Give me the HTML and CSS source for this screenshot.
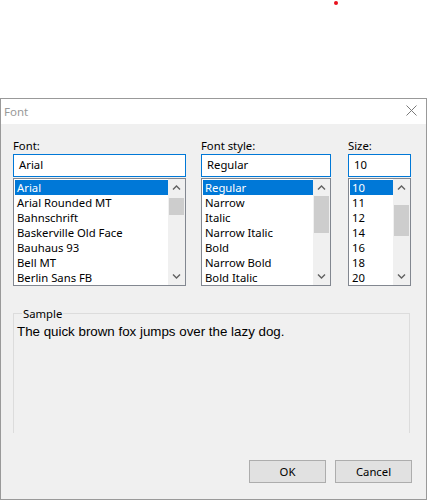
FILE: index.html
```html
<!DOCTYPE html>
<html>
<head>
<meta charset="utf-8">
<link rel="stylesheet" href="styles.css">
</head>
<body>
<div class="backdrop"><span class="dot"></span></div>
<div class="dialog">
  <div class="titlebar">
    <span class="title">Font</span>
    <svg class="close" width="11" height="11" viewBox="0 0 11 11"><path d="M0.5 0.5 L10.5 10.5 M10.5 0.5 L0.5 10.5" stroke="#7a7a7a" stroke-width="1" fill="none"/></svg>
  </div>
  <div class="content">
    <div class="pickers">
      <div class="col col-font">
        <div class="label">Font:</div>
        <div class="input">Arial</div>
        <div class="list">
          <div class="items">
            <div class="item sel">Arial</div>
            <div class="item">Arial Rounded MT</div>
            <div class="item">Bahnschrift</div>
            <div class="item">Baskerville Old Face</div>
            <div class="item">Bauhaus 93</div>
            <div class="item">Bell MT</div>
            <div class="item">Berlin Sans FB</div>
          </div>
          <div class="scrollbar">
            <svg class="arrow" width="17" height="17" viewBox="0 0 17 17"><polyline points="5,10.5 8.5,7 12,10.5" fill="none" stroke="#606060" stroke-width="1.4"/></svg>
            <div class="track"><div class="thumb" style="margin-top:2px;height:17px"></div></div>
            <svg class="arrow" width="17" height="17" viewBox="0 0 17 17"><polyline points="5,6.5 8.5,10 12,6.5" fill="none" stroke="#606060" stroke-width="1.4"/></svg>
          </div>
        </div>
      </div>
      <div class="col col-style">
        <div class="label">Font style:</div>
        <div class="input">Regular</div>
        <div class="list">
          <div class="items">
            <div class="item sel">Regular</div>
            <div class="item">Narrow</div>
            <div class="item">Italic</div>
            <div class="item">Narrow Italic</div>
            <div class="item">Bold</div>
            <div class="item">Narrow Bold</div>
            <div class="item">Bold Italic</div>
          </div>
          <div class="scrollbar">
            <svg class="arrow" width="17" height="17" viewBox="0 0 17 17"><polyline points="5,10.5 8.5,7 12,10.5" fill="none" stroke="#606060" stroke-width="1.4"/></svg>
            <div class="track"><div class="thumb" style="margin-top:0px;height:37px"></div></div>
            <svg class="arrow" width="17" height="17" viewBox="0 0 17 17"><polyline points="5,6.5 8.5,10 12,6.5" fill="none" stroke="#606060" stroke-width="1.4"/></svg>
          </div>
        </div>
      </div>
      <div class="col col-size">
        <div class="label">Size:</div>
        <div class="input">10</div>
        <div class="list">
          <div class="items">
            <div class="item sel">10</div>
            <div class="item">11</div>
            <div class="item">12</div>
            <div class="item">14</div>
            <div class="item">16</div>
            <div class="item">18</div>
            <div class="item">20</div>
          </div>
          <div class="scrollbar">
            <svg class="arrow" width="17" height="17" viewBox="0 0 17 17"><polyline points="5,10.5 8.5,7 12,10.5" fill="none" stroke="#606060" stroke-width="1.4"/></svg>
            <div class="track"><div class="thumb" style="margin-top:9px;height:31px"></div></div>
            <svg class="arrow" width="17" height="17" viewBox="0 0 17 17"><polyline points="5,6.5 8.5,10 12,6.5" fill="none" stroke="#606060" stroke-width="1.4"/></svg>
          </div>
        </div>
      </div>
    </div>
    <fieldset class="sample">
      <legend>Sample</legend>
      <div class="sample-text">The quick brown fox jumps over the lazy dog.</div>
    </fieldset>
    <div class="buttons">
      <div class="btn">OK</div>
      <div class="btn">Cancel</div>
    </div>
  </div>
</div>
</body>
</html>
```

FILE: styles.css
```css
html, body {
  margin: 0;
  padding: 0;
  background: #ffffff;
}
body {
  width: 427px;
  height: 500px;
  overflow: hidden;
  font-family: "Noto Sans", "Liberation Sans", sans-serif;
  font-size: 11.3px;
  color: #000;
}
.backdrop {
  position: relative;
  height: 98px;
  background: #fff;
}
.dot {
  position: absolute;
  left: 334px;
  top: 1px;
  width: 4px;
  height: 4px;
  border-radius: 50%;
  background: #e8101c;
}
.dialog {
  box-sizing: border-box;
  width: 427px;
  height: 402px;
  border: 1px solid #999999;
  background: #f0f0f0;
  display: flex;
  flex-direction: column;
}
.titlebar {
  height: 25px;
  background: #ffffff;
  display: flex;
  align-items: center;
  justify-content: space-between;
  padding: 0 9px 0 3px;
  color: #999999;
  font-size: 11.5px;
}
.title {
  margin-top: -1px;
}
.close {
  display: block;
  margin-top: -3px;
}
.content {
  padding: 14px 0 0 12px;
  display: flex;
  flex-direction: column;
}
.pickers {
  display: flex;
  gap: 15px;
}
.col-font { width: 173px; }
.col-style { width: 130px; }
.col-size { width: 63px; margin-left: 2px; }
.label {
  height: 15px;
  line-height: 15px;
  margin-bottom: 1px;
}
.input {
  box-sizing: border-box;
  height: 23px;
  line-height: 20px;
  border: 1px solid #0078d7;
  background: #fff;
  padding-left: 5px;
}
.list {
  box-sizing: border-box;
  margin-top: 1px;
  height: 108px;
  border: 1px solid #828790;
  background: #fff;
  display: flex;
}
.items {
  flex: 1;
  padding: 1px 0 0 1px;
  min-width: 0;
}
.item {
  height: 15px;
  line-height: 15px;
  padding-left: 2px;
  white-space: nowrap;
}
.item.sel {
  background: #0078d7;
  color: #fff;
}
.scrollbar {
  width: 17px;
  background: #f0f0f0;
  display: flex;
  flex-direction: column;
}
.arrow {
  display: block;
  flex: none;
}
.track {
  flex: 1;
}
.thumb {
  margin-left: 1px;
  margin-right: 1px;
  background: #cdcdcd;
}
.sample {
  box-sizing: border-box;
  width: 397px;
  margin: 20px 0 0 0;
  padding: 0 3px;
  border: 1px solid #dcdcdc;
  border-bottom: none;
  min-width: 0;
}
.sample legend {
  margin-left: 5px;
  padding: 0 1px;
  line-height: 15px;
}
.sample-text {
  height: 112px;
  padding-top: 3px;
  box-sizing: border-box;
  font-family: "Liberation Sans", Arial, sans-serif;
  font-size: 13.33px;
  line-height: 16px;
}
.buttons {
  display: flex;
  justify-content: flex-end;
  gap: 9px;
  margin-top: 27px;
  padding-right: 14px;
}
.btn {
  box-sizing: border-box;
  width: 77px;
  height: 23px;
  border: 1px solid #adadad;
  background: #e1e1e1;
  text-align: center;
  line-height: 21px;
}
```
